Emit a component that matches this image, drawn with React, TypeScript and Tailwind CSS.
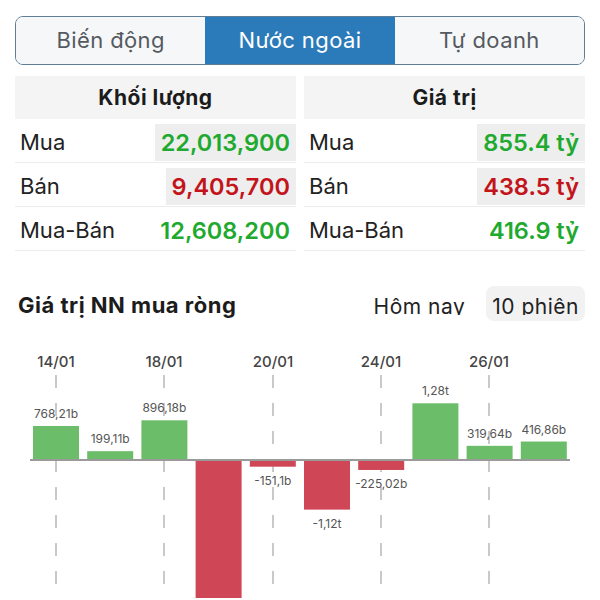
import React from "react";

type Row = { label: string; value: string; tone: "up" | "down"; boxed: boolean };

const volumeRows: Row[] = [
  { label: "Mua", value: "22,013,900", tone: "up", boxed: true },
  { label: "Bán", value: "9,405,700", tone: "down", boxed: true },
  { label: "Mua-Bán", value: "12,608,200", tone: "up", boxed: false },
];

const valueRows: Row[] = [
  { label: "Mua", value: "855.4 tỷ", tone: "up", boxed: true },
  { label: "Bán", value: "438.5 tỷ", tone: "down", boxed: true },
  { label: "Mua-Bán", value: "416.9 tỷ", tone: "up", boxed: false },
];

// bar 4 runs past the bottom of the screen, its label is never seen
const bars = [
  { v: 768.21, label: "768,21b" },
  { v: 199.11, label: "199,11b" },
  { v: 896.18, label: "896,18b" },
  { v: -3600, label: "" },
  { v: -151.1, label: "-151,1b" },
  { v: -1120, label: "-1,12t" },
  { v: -225.02, label: "-225,02b" },
  { v: 1280, label: "1,28t" },
  { v: 319.64, label: "319,64b" },
  { v: 416.86, label: "416,86b" },
];

const dates = [
  { x: 56, d: "14/01" },
  { x: 164, d: "18/01" },
  { x: 273, d: "20/01" },
  { x: 381, d: "24/01" },
  { x: 489, d: "26/01" },
];

const Tabs = () => {
  const tabs = ["Biến động", "Nước ngoài", "Tự doanh"];
  return (
    <div className="grid grid-cols-3 h-[49px] rounded-lg border-[1.5px] border-[#5f7d94] overflow-hidden">
      {tabs.map((t, i) => (
        <div
          key={t}
          className={
            i === 1
              ? "flex items-center justify-center bg-[#2b7bba] text-white text-[22px] tracking-[0.4px]"
              : "flex items-center justify-center bg-[#f6f7f9] text-[#555a60] text-[22px] tracking-[0.4px]"
          }
        >
          {t}
        </div>
      ))}
    </div>
  );
};

const StatTable = ({ title, rows }: { title: string; rows: Row[] }) => (
  <div className="flex flex-col">
    <div className="h-[43px] flex items-center justify-center bg-[#f4f4f4] text-[21px] tracking-[0.5px] font-bold text-[#1c1c1c]">
      {title}
    </div>
    {rows.map((r) => (
      <div key={r.label} className="h-[44px] flex items-start justify-between pt-[5px] border-b border-[#ececec]">
        <span className="h-[37px] flex items-center pl-[5px] text-[22px] text-[#222]">{r.label}</span>
        <span
          className={`h-[37px] flex items-center px-[6px] text-[23.5px] font-semibold ${
            r.boxed ? "bg-[#eeeeee]" : ""
          } ${r.tone === "up" ? "text-[#1faa2f]" : "text-[#c3141b]"}`}
        >
          {r.value}
        </span>
      </div>
    ))}
  </div>
);

const NetChart = () => {
  const base = 462;
  const k = 0.0443;
  return (
    <svg width={600} height={277} viewBox="0 323 600 277" className="block">
      {dates.map((d) => (
        <text key={d.d} x={d.x} y={369} textAnchor="middle" fontSize={15} fontWeight={500} fill="#444">
          {d.d}
        </text>
      ))}
      {dates.map((d) => (
        <line
          key={"l" + d.d}
          x1={d.x}
          x2={d.x}
          y1={377}
          y2={600}
          stroke="#c9c9c9"
          strokeWidth={2}
          strokeDasharray="13 15"
        />
      ))}
      {bars.map((b, i) => {
        const x = 33 + i * 54.2;
        const h = Math.abs(b.v) * k;
        const up = b.v >= 0;
        const cx = x + 23;
        return (
          <g key={i}>
            <rect x={x} y={up ? base - h : base} width={46} height={h} fill={up ? "#6cbd6a" : "#cf4757"} />
            {b.label && (
              <text
                x={cx}
                y={up ? base - h - 8 : base + h + 18}
                textAnchor="middle"
                fontSize={12}
                fill="#555"
              >
                {b.label}
              </text>
            )}
          </g>
        );
      })}
      <line x1={30} x2={570} y1={base} y2={base} stroke="#9a9a9a" strokeWidth={2} />
    </svg>
  );
};

export default function App() {
  return (
    <div className="w-[600px] h-[600px] overflow-hidden bg-white" style={{ fontFamily: "Inter, 'Noto Sans', sans-serif" }}>
      <div className="px-[15px] pt-4">
        <Tabs />
        <div className="grid grid-cols-2 gap-2 mt-[11px]">
          <StatTable title="Khối lượng" rows={volumeRows} />
          <StatTable title="Giá trị" rows={valueRows} />
        </div>
        <div className="flex items-start justify-between mt-[35px] h-[35px]">
          <h2 className="pt-[5.5px] pl-[3px] text-[22px] leading-[26px] tracking-[0.5px] font-bold text-[#1c1c1c]">
            Giá trị NN mua ròng
          </h2>
          <div className="flex items-start gap-[15px]">
            <div className="h-[35px] px-[6px] pt-[7.5px] rounded-lg">
              <span className="block h-[21px] overflow-hidden text-[21px] leading-[26px] tracking-[0.5px] text-[#222]">
                Hôm nay
              </span>
            </div>
            <div className="h-[35px] px-[6px] pt-[7.5px] rounded-lg bg-[#f2f2f2]">
              <span className="block h-[21px] overflow-hidden text-[21px] leading-[26px] tracking-[0.5px] text-[#222]">
                10 phiên
              </span>
            </div>
          </div>
        </div>
      </div>
      <NetChart />
    </div>
  );
}
